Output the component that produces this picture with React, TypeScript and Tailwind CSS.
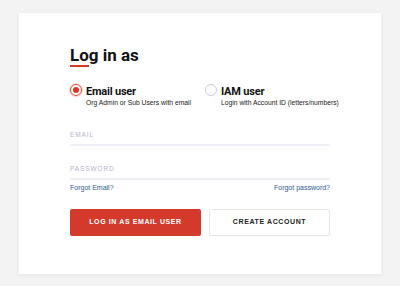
import React, { useState } from 'react'

function Radio({ checked }: { checked: boolean }) {
  return (
    <span
      className={
        'mt-[-1.5px] flex h-[12px] w-[12px] shrink-0 items-center justify-center rounded-full border ' +
        (checked ? 'border-[#e04a3c] shadow-[0_0_0_1px_#f8d3cf]' : 'border-[#c9cbdc]')
      }
    >
      {checked && <span className="h-[6px] w-[6px] rounded-full bg-[#d7372a]" />}
    </span>
  )
}

export default function App() {
  const [mode, setMode] = useState<'email' | 'iam'>('email')

  return (
    <div className="min-h-screen bg-[#f3f3f3] px-[19px] pt-[13px] font-['Liberation_Sans',Arial,sans-serif]">
      <div className="h-[261px] bg-white px-[51px] pt-[32px] shadow-[0_1px_6px_rgba(0,0,0,0.06)]">
        <h2 className="font-['Roboto',sans-serif] text-[17px] font-bold leading-[20px] text-[#111]">Log in as</h2>
        <div className="h-[2px] w-[19px] bg-[#d7372a]" />

        <div className="mt-[18px] flex">
          <button className="flex w-[135px] shrink-0 gap-[4px] text-left" onClick={() => setMode('email')}>
            <Radio checked={mode === 'email'} />
            <div>
              <div className="font-['Roboto',sans-serif] text-[11px] font-bold leading-[13px] tracking-[-0.2px] text-[#111]">
                Email user
              </div>
              <div className="mt-[1px] whitespace-nowrap text-[6.75px] leading-[8px] text-[#222]">
                Org Admin or Sub Users with email
              </div>
            </div>
          </button>
          <button className="flex shrink-0 gap-[4px] text-left" onClick={() => setMode('iam')}>
            <Radio checked={mode === 'iam'} />
            <div>
              <div className="font-['Roboto',sans-serif] text-[11px] font-bold leading-[13px] tracking-[-0.2px] text-[#111]">
                IAM user
              </div>
              <div className="mt-[1px] whitespace-nowrap text-[6.75px] leading-[8px] text-[#222]">
                Login with Account ID (letters/numbers)
              </div>
            </div>
          </button>
        </div>

        <input
          placeholder="EMAIL"
          className="mt-[21px] block h-[18px] w-full border-b-2 border-[#eef0f6] bg-transparent pb-[4px] text-[6.5px] tracking-[0.9px] text-[#333] outline-none placeholder:text-[#b4b4cc]"
        />
        <input
          type="password"
          placeholder="PASSWORD"
          className="mt-[16px] block h-[18px] w-full border-b-2 border-[#eef0f6] bg-transparent pb-[4px] text-[6.5px] tracking-[0.9px] text-[#333] outline-none placeholder:text-[#b4b4cc]"
        />
        <div className="mt-[3px] flex justify-between text-[7px] leading-[10px]">
          <a href="#" className="text-[#2f5b93]">Forgot Email?</a>
          <a href="#" className="text-[#2f5b93]">Forgot password?</a>
        </div>

        <div className="mt-[16px] flex items-start gap-[8px]">
          <button className="h-[27px] w-[131px] rounded-[2px] bg-[#d33a2b] text-[7px] font-bold tracking-[0.6px] text-white">
            LOG IN AS EMAIL USER
          </button>
          <button className="h-[27px] flex-1 rounded-[2px] border border-[#e6e7ef] bg-white text-[7px] font-bold tracking-[0.6px] text-[#222]">
            CREATE ACCOUNT
          </button>
        </div>
      </div>
    </div>
  )
}
